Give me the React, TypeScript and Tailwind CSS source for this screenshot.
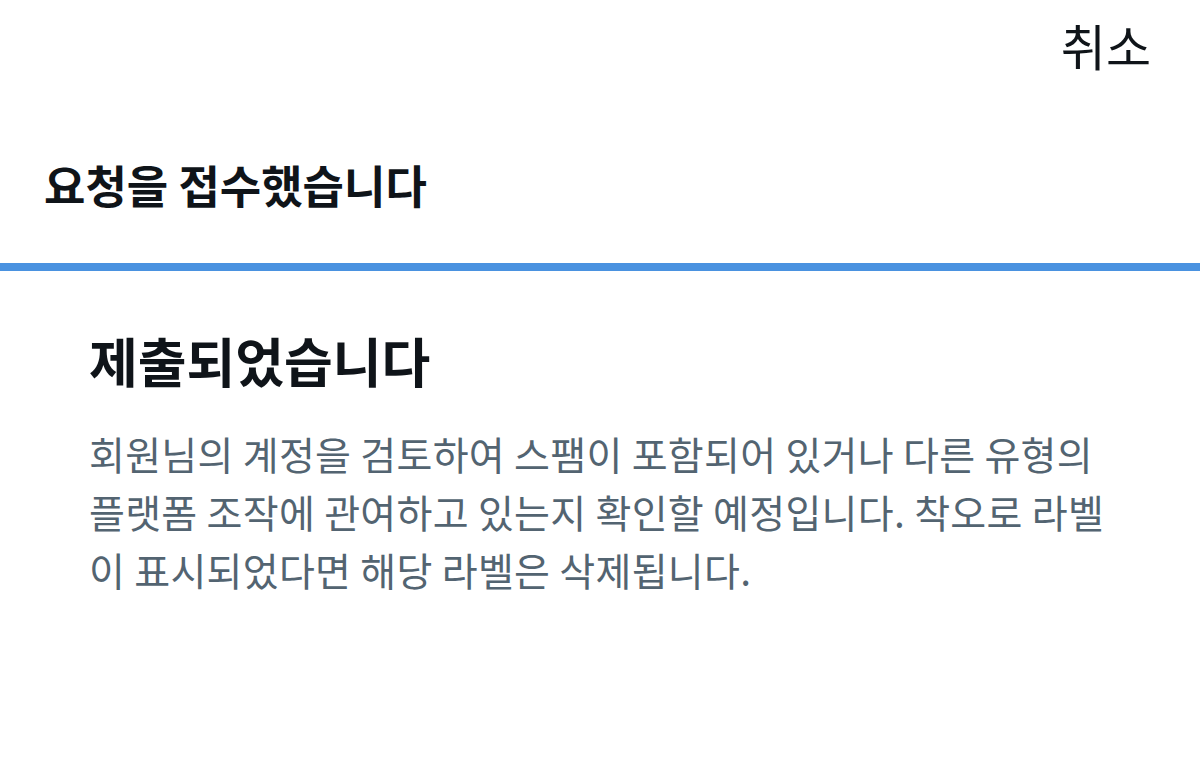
import React from "react";

export default function App() {
  const font = { fontFamily: '"Noto Sans CJK KR", "Noto Sans", sans-serif' };
  return (
    <div className="w-[1200px] h-[776px] bg-white overflow-hidden" style={font}>
      <div className="flex justify-end pr-[49px] pt-[10px] h-[100px]">
        <span className="text-[49px] leading-[70px] text-[#0f1419]">취소</span>
      </div>
      <div className="pl-[44px] h-[163px] pt-[57px]">
        <h1 className="text-[45px] leading-[56px] font-bold text-[#0f1419]">요청을 접수했습니다</h1>
      </div>
      <div className="h-[8px] bg-[#4a92e0]" />
      <div className="pl-[89px] pt-[57px]">
        <h2 className="text-[53px] leading-[64px] font-bold text-[#0f1419]">제출되었습니다</h2>
        <p className="mt-[32px] text-[39px] leading-[58px] tracking-[0.3px] text-[#536471]">
          회원님의 계정을 검토하여 스팸이 포함되어 있거나 다른 유형의
          <br />
          플랫폼 조작에 관여하고 있는지 확인할 예정입니다. 착오로 라벨
          <br />
          이 표시되었다면 해당 라벨은 삭제됩니다.
        </p>
      </div>
    </div>
  );
}
